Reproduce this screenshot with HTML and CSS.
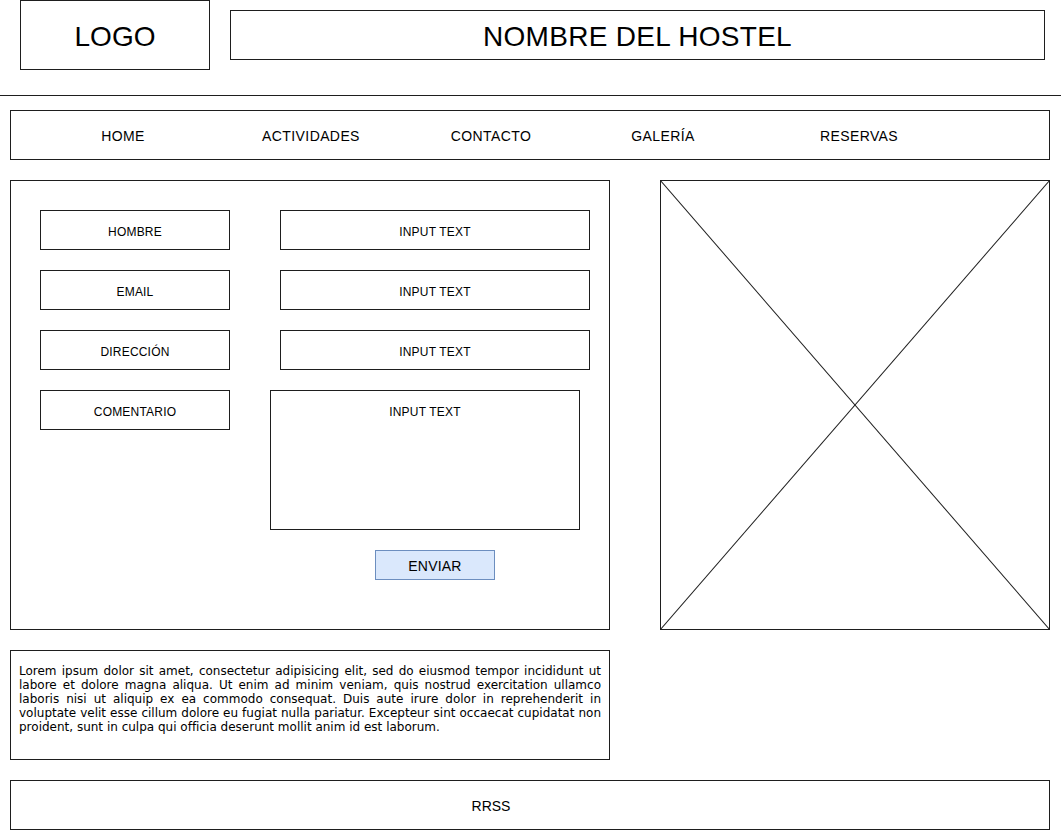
FILE: index.html
```html
<!DOCTYPE html>
<html lang="es">
<head>
<meta charset="utf-8">
<title>Nombre del Hostel</title>
<link rel="stylesheet" href="styles.css">
</head>
<body>
<header class="header">
  <div class="logo sk">LOGO</div>
  <h1 class="title sk">NOMBRE DEL HOSTEL</h1>
</header>
<div class="rule"></div>

<nav class="nav sk">
  <span>HOME</span>
  <span>ACTIVIDADES</span>
  <span>CONTACTO</span>
  <span>GALERÍA</span>
  <span>RESERVAS</span>
</nav>

<main class="main">
  <form class="form sk">
    <div class="label sk">HOMBRE</div>
    <div class="input sk">INPUT TEXT</div>
    <div class="label sk">EMAIL</div>
    <div class="input sk">INPUT TEXT</div>
    <div class="label sk">DIRECCIÓN</div>
    <div class="input sk">INPUT TEXT</div>
    <div class="label sk">COMENTARIO</div>
    <div class="textarea sk">INPUT TEXT</div>
    <div class="btn-row"><button type="button" class="btn">ENVIAR</button></div>
  </form>
  <div class="image sk">
    <svg class="cross" viewBox="0 0 100 100" preserveAspectRatio="none">
      <line x1="0" y1="0" x2="100" y2="100" vector-effect="non-scaling-stroke"/>
      <line x1="100" y1="0" x2="0" y2="100" vector-effect="non-scaling-stroke"/>
    </svg>
  </div>
  <p class="lorem sk">Lorem ipsum dolor sit amet, consectetur adipisicing elit, sed do eiusmod tempor incididunt ut labore et dolore magna aliqua. Ut enim ad minim veniam, quis nostrud exercitation ullamco laboris nisi ut aliquip ex ea commodo consequat. Duis aute irure dolor in reprehenderit in voluptate velit esse cillum dolore eu fugiat nulla pariatur. Excepteur sint occaecat cupidatat non proident, sunt in culpa qui officia deserunt mollit anim id est laborum.</p>
</main>

<footer class="footer sk">RRSS</footer>
</body>
</html>
```

FILE: styles.css
```css
* { box-sizing: border-box; }

html, body {
  margin: 0;
  padding: 0;
  background: #fff;
}

body {
  width: 1061px;
  font-family: "Liberation Sans", Arial, Helvetica, sans-serif;
  color: #000;
  overflow: hidden;
}

/* sketch-style outlined box */
.sk {
  box-shadow: inset 0 0 0 1px #1e1e1e;
}

.header {
  display: flex;
  align-items: flex-start;
  gap: 20px;
  padding-left: 20px;
  height: 95px;
}

.logo {
  width: 190px;
  height: 70px;
  display: flex;
  align-items: center;
  justify-content: center;
  padding-top: 3px;
  font-size: 28px;
}

.title {
  margin: 10px 0 0;
  width: 815px;
  height: 50px;
  display: flex;
  align-items: center;
  justify-content: center;
  padding-top: 3px;
  font-size: 28px;
  letter-spacing: 0.3px;
  font-weight: normal;
}

.rule {
  height: 0;
  border-top: 1px solid #1e1e1e;
}

.nav {
  margin: 14px 11px 0 10px;
  height: 50px;
  display: grid;
  grid-template-columns: 188px 188px 172px 172px 220px;
  padding-left: 19px;
  padding-top: 2px;
  align-items: center;
  justify-items: center;
  font-size: 14px;
  letter-spacing: 0.4px;
}

.main {
  display: grid;
  grid-template-columns: 600px 390px;
  column-gap: 50px;
  row-gap: 20px;
  margin: 20px 0 0 10px;
}

.form {
  height: 450px;
  padding: 30px 0 0 30px;
  display: grid;
  grid-template-columns: 190px 310px;
  column-gap: 50px;
  row-gap: 20px;
  align-content: start;
  align-items: start;
  margin: 0;
}

.label,
.input {
  height: 40px;
  display: flex;
  align-items: center;
  justify-content: center;
  padding-top: 3px;
  font-size: 12px;
  letter-spacing: 0.2px;
}

.textarea {
  grid-column: 2;
  height: 140px;
  margin-left: -10px;
  width: 310px;
  text-align: center;
  padding-top: 15px;
  font-size: 12px;
  letter-spacing: 0.2px;
}

.btn-row {
  grid-column: 2;
  display: flex;
  justify-content: center;
}

.btn {
  width: 120px;
  height: 30px;
  background: #dae8fc;
  border: 1px solid #6c8ebf;
  font-family: inherit;
  font-size: 14px;
  letter-spacing: 0.2px;
  color: #000;
  padding: 2px 0 0;
}

.image {
  height: 450px;
}

.cross {
  display: block;
  width: 100%;
  height: 100%;
}
.cross line {
  stroke: #1e1e1e;
  stroke-width: 1;
}

.lorem {
  grid-column: 1;
  margin: 0;
  height: 110px;
  padding: 14px 9px 0 9px;
  font-family: "DejaVu Sans", Verdana, sans-serif;
  font-size: 12px;
  line-height: 14px;
  text-align: justify;
}

.footer {
  margin: 20px 11px 0 10px;
  height: 50px;
  display: flex;
  align-items: center;
  justify-content: center;
  padding-right: 78px;
  padding-top: 2px;
  font-size: 14px;
}
```
